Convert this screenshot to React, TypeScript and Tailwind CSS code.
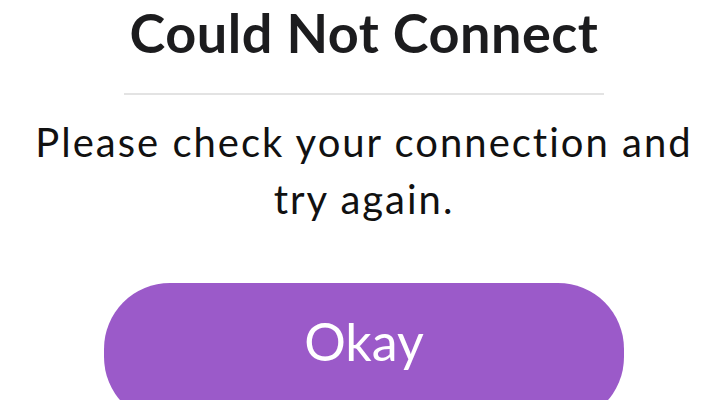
export default function App() {
  return (
    <div className="w-[728px] h-[400px] overflow-hidden bg-white flex flex-col items-center [font-variant-ligatures:none]" style={{ fontFamily: "Lato, 'Noto Sans', sans-serif" }}>
      <h1 className="text-[54px] leading-[66px] font-bold text-[#1c1c1e] tracking-[0.5px]">Could Not Connect</h1>
      <div className="mt-[27px] w-[480px] h-[2px] shrink-0 bg-[#e3e3e3]" />
      <p className="mt-[19px] text-[40px] leading-[57px] text-[#111111] text-center tracking-[2px]">
        Please check your connection and
        <br />
        try again.
      </p>
      <button className="mt-[55px] w-[520px] h-[140px] shrink-0 rounded-[66px] bg-[#9b5ac9] text-white flex justify-center items-start pt-[28px]">
        <span className="text-[52px] leading-[60px]">Okay</span>
      </button>
    </div>
  );
}
